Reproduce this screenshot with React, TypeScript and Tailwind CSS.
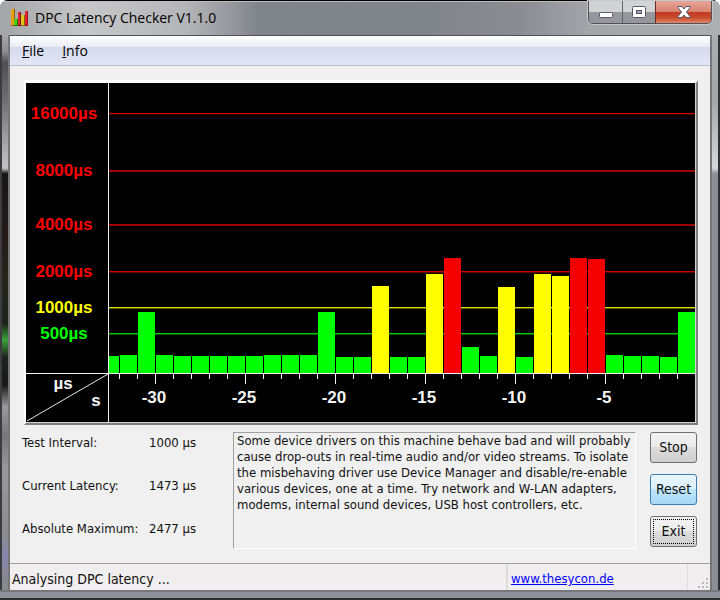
import React from 'react';

type Level = 'green' | 'yellow' | 'red';

const levelColors: Record<Level, string> = {
    green: '#00ff00',
    yellow: '#ffff00',
    red: '#f30000'
};

// Newest sample is last, one per second
const samples: { height: number; level: Level }[] = [
    { height: 17, level: 'green' },
    { height: 18, level: 'green' },
    { height: 61, level: 'green' },
    { height: 18, level: 'green' },
    { height: 17, level: 'green' },
    { height: 17, level: 'green' },
    { height: 17, level: 'green' },
    { height: 17, level: 'green' },
    { height: 17, level: 'green' },
    { height: 18, level: 'green' },
    { height: 18, level: 'green' },
    { height: 18, level: 'green' },
    { height: 61, level: 'green' },
    { height: 16, level: 'green' },
    { height: 16, level: 'green' },
    { height: 87, level: 'yellow' },
    { height: 16, level: 'green' },
    { height: 16, level: 'green' },
    { height: 99, level: 'yellow' },
    { height: 115, level: 'red' },
    { height: 26, level: 'green' },
    { height: 17, level: 'green' },
    { height: 86, level: 'yellow' },
    { height: 16, level: 'green' },
    { height: 99, level: 'yellow' },
    { height: 97, level: 'yellow' },
    { height: 115, level: 'red' },
    { height: 114, level: 'red' },
    { height: 18, level: 'green' },
    { height: 17, level: 'green' },
    { height: 17, level: 'green' },
    { height: 16, level: 'green' },
    { height: 61, level: 'green' }
];

const gridLines = [
    { label: '16000µs', y: 30, color: '#ff0000', line: '#e00000', shade: '#300000' },
    { label: '8000µs', y: 87, color: '#ff0000', line: '#a00000', shade: '#a00000' },
    { label: '4000µs', y: 141, color: '#ff0000', line: '#a00000', shade: '#a00000' },
    { label: '2000µs', y: 188, color: '#ff0000', line: '#c80000', shade: '#600000' },
    { label: '1000µs', y: 224, color: '#ffff00', line: '#d8d800', shade: '#606000' },
    { label: '500µs', y: 250, color: '#00ff00', line: '#00c800', shade: '#005800' }
];

const STEP = 18;
const PLOT_LEFT = 82;
const PLOT_RIGHT = 669;
const BASE = 290;

const LatencyChart: React.FC = () => {
    const seconds = Array.from({ length: 32 }, (_, i) => i + 1);

    return (
        <svg viewBox="0 0 669 339" className="block h-auto w-full bg-black" role="img" aria-label="DPC latency history">
            {gridLines.map((g) => (
                <g key={g.label}>
                    <rect x={PLOT_LEFT} y={g.y} width={PLOT_RIGHT - PLOT_LEFT} height="1" fill={g.line} />
                    <rect x={PLOT_LEFT} y={g.y + 1} width={PLOT_RIGHT - PLOT_LEFT} height="1" fill={g.shade} />
                    <text x="38" y={g.y + 6} textAnchor="middle" fill={g.color} className="font-['Liberation_Sans',Arial,sans-serif] text-[17px] font-bold">
                        {g.label}
                    </text>
                </g>
            ))}

            {samples.map((s, i) => {
                const x = PLOT_RIGHT - (samples.length - i) * STEP + 1;
                const left = Math.max(x, PLOT_LEFT + 1);
                return (
                    <rect key={i} x={left} y={BASE - s.height} width={x + 17 - left} height={s.height} fill={levelColors[s.level]} />
                );
            })}

            {/* Axes */}
            <rect x={PLOT_LEFT} y="0" width="1" height="339" fill="#f0f0f0" />
            <rect x="0" y={BASE} width="669" height="1" fill="#f0f0f0" />
            <line x1="1" y1="338" x2={PLOT_LEFT} y2={BASE + 1} stroke="#e8e8e8" strokeWidth="1" />

            {seconds.map((n) => (
                <rect key={n} x={PLOT_RIGHT - n * STEP} y={BASE + 1} width="1" height={n % 5 === 0 ? 10 : 5} fill="#f0f0f0" />
            ))}
            {seconds.filter((n) => n % 5 === 0).map((n) => (
                <text key={n} x={PLOT_RIGHT - n * STEP - 1} y="320" textAnchor="middle" fill="#f4f4f4" className="font-['Liberation_Sans',Arial,sans-serif] text-[17px] font-bold">
                    {-n}
                </text>
            ))}
            <text x="37" y="306" textAnchor="middle" fill="#f4f4f4" className="font-['Liberation_Sans',Arial,sans-serif] text-[17px] font-bold">µs</text>
            <text x="70" y="323" textAnchor="middle" fill="#f4f4f4" className="font-['Liberation_Sans',Arial,sans-serif] text-[17px] font-bold">s</text>
        </svg>
    );
};

const AppIcon: React.FC = () => (
    <svg width="17" height="18" viewBox="0 0 17 18" aria-hidden="true">
        <rect x="0" y="1" width="4" height="17" fill="#8a5a10" />
        <rect x="0" y="1" width="3" height="16" fill="#e8a010" />
        <rect x="3" y="11" width="4" height="7" fill="#207810" />
        <rect x="3" y="11" width="3" height="6" fill="#48d010" />
        <rect x="7" y="4" width="3" height="14" fill="#801010" />
        <rect x="7" y="4" width="2" height="13" fill="#e02828" />
        <rect x="10" y="7" width="4" height="11" fill="#806810" />
        <rect x="10" y="7" width="3" height="10" fill="#e0c818" />
        <rect x="14" y="3" width="3" height="15" fill="#a01020" />
        <rect x="14" y="3" width="2" height="14" fill="#f02030" />
    </svg>
);

const captionButton = 'flex h-[22px] items-center justify-center pb-px';

const TitleBar: React.FC = () => (
    <header className="flex h-[35px] items-start border-t border-black bg-[linear-gradient(90deg,#a4a5a8_0%,#c6c7c9_12%,#b4b5b8_26%,#80848b_36%,#7f838a_58%,#8a8c92_72%,#a4a5a9_82%,#acaeb1_100%)] shadow-[inset_0_1px_0_#bdbdc2]">
        <div className="flex h-8 flex-1 items-center gap-[7px] pl-[11px]">
            <AppIcon />
            <h1 className="font-['Open_Sans','Noto_Sans',sans-serif] text-[14px] text-black">DPC Latency Checker V1.1.0</h1>
        </div>
        <div className="mr-2 flex overflow-hidden rounded-b-[5px] border border-t-0 border-[#505056] shadow-[0_0_0_1px_#c8c8cb]">
            <button aria-label="Minimize" className={`${captionButton} w-[34px] border-r border-[#606066] bg-linear-to-b from-[#d2d3d5] from-50% to-[#96979d] to-50%`}>
                <svg width="14" height="6" viewBox="0 0 14 6" className="mt-1.5">
                    <rect x="0.5" y="0.5" width="13" height="5" rx="1" fill="#fff" stroke="#55586a" />
                </svg>
            </button>
            <button aria-label="Maximize" className={`${captionButton} w-8 bg-linear-to-b from-[#d2d3d5] from-50% to-[#96979d] to-50%`}>
                <svg width="14" height="12" viewBox="0 0 14 12" className="mt-px">
                    <rect x="0.5" y="0.5" width="13" height="11" rx="1" fill="#fff" stroke="#55586a" />
                    <rect x="4.5" y="4.5" width="5" height="3" fill="#a5a6ac" stroke="#55586a" />
                </svg>
            </button>
            <button aria-label="Close" className={`${captionButton} w-14 border-l border-[#6a2a20] bg-[linear-gradient(180deg,#e6a496_0%,#d88472_48%,#bf3a20_50%,#c84a2c_75%,#e08868_100%)]`}>
                <svg width="14" height="12" viewBox="0 0 14 12" className="mt-px">
                    <path d="M1 .5h4L7 3 9 .5h4v1L9.500 6l3.500 4.500v1H9L7 9l-2 2.500H1v-1L4.500 6 1 1.500z" fill="#fff" stroke="#55586a" strokeWidth="1" strokeLinejoin="round" />
                </svg>
            </button>
        </div>
    </header>
);

const Reading: React.FC<{ label: string; value: string }> = ({ label, value }) => (
    <div className="flex h-5 items-center">
        <dt className="w-[127px] whitespace-nowrap">{label}</dt>
        <dd>{value}</dd>
    </div>
);

const dialogButton = 'h-[31px] w-[47px] rounded-[3px] border text-[14px]';

const App: React.FC = () => {
    return (
        <div className="flex min-h-screen flex-col overflow-hidden rounded-t-lg bg-[#8b9098] font-['DejaVu_Sans_Condensed','Noto_Sans',sans-serif] text-[13px] text-[#101010]">
            <TitleBar />

            <div className="flex flex-1">
                {/* Glass border, with the blurred desktop behind it */}
                <div className="w-[10px] border-x-2 border-l-[#3c3c40] border-r-[#77777b] bg-[linear-gradient(180deg,#a8a8ab_0%,#8c8c8e_3%,#505053_5%,#707073_12%,#c4c4c6_24%,#161616_25%,#241a18_36%,#26261a_44%,#1c241c_52%,#38a038_55%,#202420_58%,#181818_63%,#9a9a9c_67%,#77777a_72%,#98989a_78%,#8c8c90_90%,#8585b0_94%,#88898c_98%)]"></div>

                <main className="flex min-w-0 flex-1 flex-col border-t border-[#505058] bg-[#f0f0f0]">
                    <nav className="flex h-[30px] items-center gap-[18px] border-b border-[#b8bccc] bg-[linear-gradient(180deg,#ffffff_0%,#e9ecf6_37%,#d4daec_38%,#e2e7f6_100%)] px-3 font-['Open_Sans','Noto_Sans',sans-serif] text-[14px] text-black">
                        <button><u>F</u>ile</button>
                        <button><u>I</u>nfo</button>
                    </nav>

                    <div className="pt-[14px] pr-3 pl-[14px]">
                        <div className="border-2 border-t-3 border-t-white border-r-[#808080] border-b-[#808080] border-l-white">
                            <div className="border-r border-b border-[#d4d4d4]">
                                <LatencyChart />
                            </div>
                        </div>
                    </div>

                    <div className="flex flex-1 items-start pt-[7px] pr-3 pb-[14px] pl-3">
                        <dl className="flex w-[211px] flex-col gap-[23px] pt-px">
                            <Reading label="Test Interval:" value="1000 µs" />
                            <Reading label="Current Latency:" value="1473 µs" />
                            <Reading label="Absolute Maximum:" value="2477 µs" />
                        </dl>
                        <textarea
                            readOnly
                            aria-label="Analysis"
                            className="h-[117px] min-w-0 flex-1 resize-none overflow-hidden border border-t-[#a0a0a0] border-r-white border-b-white border-l-[#a0a0a0] bg-[#f0f0f0] px-[3px] leading-4 outline-none"
                            value="Some device drivers on this machine behave bad and will probably cause drop-outs in real-time audio and/or video streams. To isolate the misbehaving driver use Device Manager and disable/re-enable various devices, one at a time. Try network and W-LAN adapters, modems, internal sound devices, USB host controllers, etc."
                        />
                        <div className="ml-[14px] flex flex-col gap-[11px] pr-px">
                            <button className={`${dialogButton} border-[#707070] bg-[linear-gradient(180deg,#f2f2f2_0%,#ebebeb_48%,#dddddd_50%,#cfcfcf_100%)]`}>Stop</button>
                            <button className={`${dialogButton} border-[#3c7fb1] bg-[linear-gradient(180deg,#eaf6fd_0%,#d9f0fc_48%,#bee6fd_50%,#a7d9f5_100%)]`}>Reset</button>
                            <button className={`${dialogButton} border-[#707070] bg-[linear-gradient(180deg,#f2f2f2_0%,#ebebeb_48%,#dddddd_50%,#cfcfcf_100%)] p-0.5`}>
                                <span className="flex h-full items-center justify-center border border-dotted border-black">Exit</span>
                            </button>
                        </div>
                    </div>

                    <footer className="flex h-[27px] items-center border-t border-[#a0a0a0] bg-[#f0eeee] text-[14px]">
                        <span className="flex-1 pt-1 pl-0.5">Analysing DPC latency ...</span>
                        <div className="flex h-full w-[181px] items-center border-l-2 border-[#dcdcdc] pt-1 pl-[3px]">
                            <a href="http://www.thesycon.de" className="text-[13px] text-[#0000ff] underline">www.thesycon.de</a>
                        </div>
                        <div className="flex h-full w-[23px] items-end justify-end border-l border-[#dcdcdc] p-0.5">
                            <svg width="10" height="10" viewBox="0 0 10 10" fill="#b8b8b8" aria-hidden="true">
                                <rect x="8" y="0" width="2" height="2" />
                                <rect x="4" y="4" width="2" height="2" />
                                <rect x="8" y="4" width="2" height="2" />
                                <rect x="0" y="8" width="2" height="2" />
                                <rect x="4" y="8" width="2" height="2" />
                                <rect x="8" y="8" width="2" height="2" />
                            </svg>
                        </div>
                    </footer>
                </main>

                <div className="w-[10px] border-r-2 border-l-2 border-r-[#303034] border-l-[#77777b] bg-[linear-gradient(180deg,#aaacb0_0%,#a4a6aa_12%,#d6d7d9_24%,#8b9098_25%,#8b9098_100%)]"></div>
            </div>

            <div className="h-[10px] border-t-2 border-b-2 border-t-[#77777b] border-b-[#303034] bg-[#8b9298]"></div>
        </div>
    );
};

export default App;
